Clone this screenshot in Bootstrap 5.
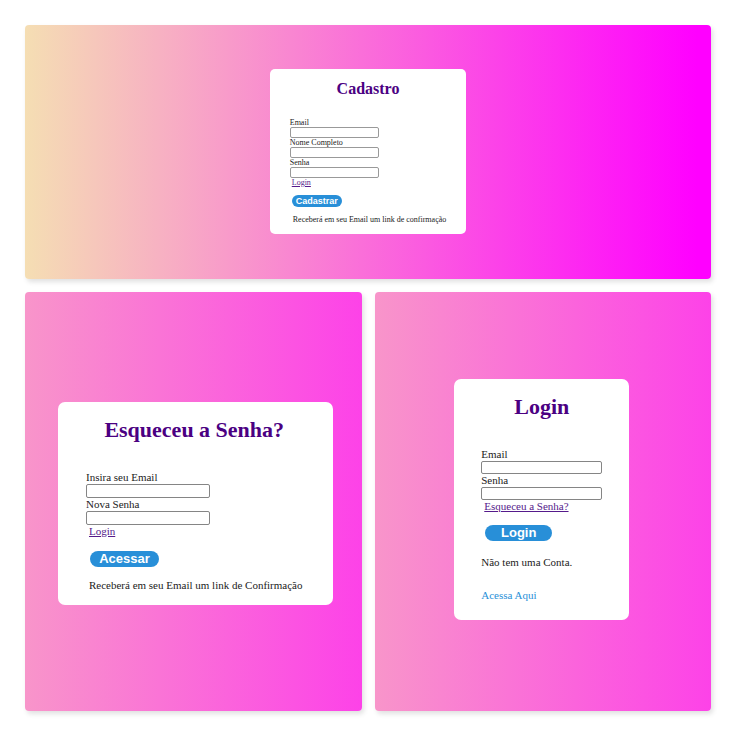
<!DOCTYPE html>
<html lang="pt-BR">
<head>
<meta charset="utf-8">
<meta name="viewport" content="width=device-width, initial-scale=1">
<title>Cadastro e Login</title>
<link href="https://cdn.jsdelivr.net/npm/bootstrap@5.3.0/dist/css/bootstrap.min.css" rel="stylesheet">
<style>
body { background: #fff; font-family: "Liberation Serif", "Times New Roman", serif; color: #222; }
.board { padding: 25px; display: grid; grid-template-columns: 1fr 1fr; grid-template-rows: minmax(254px, 254fr) minmax(419px, 419fr); gap: 13px; min-height: 100vh; }
.panel { border-radius: 4px; box-shadow: 2px 3px 5px rgba(0,0,0,.12); background: linear-gradient(to right, #f895ca, #fd42e8); }
.panel-wide { grid-column: 1 / -1; padding-bottom: 2px; background: linear-gradient(to right, #f5deb3, #f0f 98%); }
.panel-reset { padding: 3px 0 0 4px; }
.panel-login { padding: 0 2px 5px 0; }
.sheet { background: #fff; border-radius: 7px; font-size: 11px; line-height: 13px; padding: 14px 30px 13px 28px; }
.sheet h1 { color: #4b0082; font-weight: 700; font-size: 22px; line-height: 28px; margin: 0 0 27px; text-align: center; }
.sheet input { display: block; width: 124px; height: 14px; padding: 0 2px; border: 1px solid #858585; border-radius: 2px; font-size: 10px; background: #fff; }
.sheet label { display: block; }
.visited { color: #551a8b; margin-left: 3px; align-self: flex-start; text-decoration: underline; }
.pill { align-self: flex-start; border: 0; border-radius: 8px; background: #288fd8; color: #fff; font: 700 13px/16px "Liberation Sans", Arial, sans-serif; height: 16px; width: 69px; padding: 0; margin: 13px 0 12px 4px; }
.sheet p { margin: 0 0 0 3px; }
.sheet-small { font-size: 8px; line-height: 9px; border-radius: 5px; padding: 10px 20px; }
.sheet-small h1 { font-size: 16px; line-height: 20px; margin-bottom: 19px; }
.sheet-small input { width: 89px; height: 11px; font-size: 8px; border-color: #999; }
.sheet-small .visited { margin-left: 2px; }
.sheet-small .pill { font-size: 9px; line-height: 12px; height: 12px; width: 50px; margin: 8px 0 8px 2px; }
.sheet-login { padding: 14px 27px 18px; }
.sheet-login input { width: 121px; height: 13px; }
.sheet-login .pill { width: 67px; margin: 12px 0 15px 4px; }
.sheet-login p { margin: 0 0 20px; }
.start { color: #288fd8; text-decoration: none; }
</style>
<script src="https://cdn.jsdelivr.net/npm/bootstrap@5.3.0/dist/js/bootstrap.bundle.min.js"></script>
</head>
<body>
<main class="board">
  <section class="panel panel-wide d-flex align-items-center justify-content-center">
    <form class="sheet sheet-small d-flex flex-column" id="cadastro">
      <h1>Cadastro</h1>
      <label for="c-email">Email</label><input id="c-email" type="email">
      <label for="c-nome">Nome Completo</label><input id="c-nome" type="text">
      <label for="c-senha">Senha</label><input id="c-senha" type="password">
      <a class="visited" href="#login">Login</a>
      <button class="pill" type="button">Cadastrar</button>
      <p>Receberá em seu Email um link de confirmação</p>
    </form>
  </section>
  <section class="panel panel-reset d-flex align-items-center justify-content-center">
    <form class="sheet d-flex flex-column" id="senha">
      <h1>Esqueceu a Senha?</h1>
      <label for="e-email">Insira seu Email</label><input id="e-email" type="email">
      <label for="e-senha">Nova Senha</label><input id="e-senha" type="password">
      <a class="visited" href="#login">Login</a>
      <button class="pill" type="button">Acessar</button>
      <p>Receberá em seu Email um link de Confirmação</p>
    </form>
  </section>
  <section class="panel panel-login d-flex align-items-center justify-content-center">
    <form class="sheet sheet-login d-flex flex-column" id="login">
      <h1>Login</h1>
      <label for="l-email">Email</label><input id="l-email" type="email">
      <label for="l-senha">Senha</label><input id="l-senha" type="password">
      <a class="visited" href="#senha">Esqueceu a Senha?</a>
      <button class="pill" type="button">Login</button>
      <p>Não tem uma Conta.</p>
      <a class="start" href="#cadastro">Acessa Aqui</a>
    </form>
  </section>
</main>
</body>
</html>
